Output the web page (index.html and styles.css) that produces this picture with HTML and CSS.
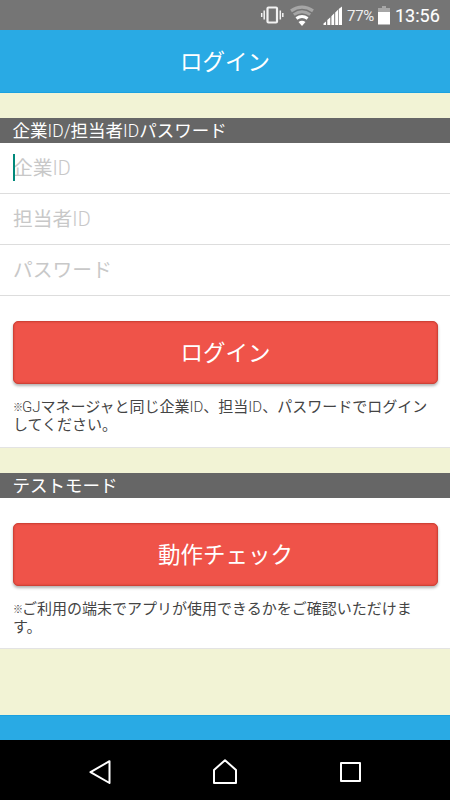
FILE: index.html
```html
<!DOCTYPE html>
<html lang="ja">
<head>
<meta charset="utf-8">
<title>ログイン</title>
<link rel="stylesheet" href="styles.css">
</head>
<body>
<div class="screen">
  <div class="status">
    <svg class="status-icons" width="84" height="30" viewBox="0 0 84 30">
      <g fill="none" stroke="#f2f2f2" stroke-width="1.5">
        <rect x="7.5" y="7.500" width="9.500" height="15" rx="1" stroke-width="2.2"/>
        <path d="M4.200 10.500v9M1.700 13v4M20.300 10.500v9M22.800 13v4"/>
      </g>
      <g fill="none">
        <path d="M31 10.800Q42 3.500 53 10.800" stroke="#a6a6a6" stroke-width="3.200"/>
        <path d="M33.800 14.600Q42 8.800 50.200 14.600" stroke="#a6a6a6" stroke-width="3"/>
        <path d="M36.400 18.500Q42 14.500 47.600 18.500" stroke="#fff" stroke-width="3"/>
      </g>
      <path d="M38.500 22Q42 19.500 45.500 22L42 26Z" fill="#fff"/>
      <path d="M63.500 25v-1.500l2.500-2V25ZM67.300 25v-5l3-2.700V25ZM71.400 25v-8.700l2.800-3V25ZM75.200 25V12.500l2.800-2.800V25ZM78.700 25V9L82 6.500V25Z" fill="#fff"/>
    </svg>
    <span class="percent">77%</span>
    <svg class="battery" width="12" height="19" viewBox="0 0 12 19"><path d="M4 0h4v2h4v4H0V2h4Z" fill="#a6a6a6"/><path d="M0 6h12v12.500H0Z" fill="#fff"/></svg>
    <span class="clock">13:56</span>
  </div>
  <header class="header">ログイン</header>
  <main class="content">
    <h2 class="section-title">企業<span class="latin">ID/</span>担当者<span class="latin">ID</span>パスワード</h2>
    <section class="panel">
      <div class="field focused">企業<span class="latin">ID</span></div>
      <div class="field">担当者<span class="latin">ID</span></div>
      <div class="field">パスワード</div>
      <div class="action first">
        <div class="button">ログイン</div>
        <p class="note"><span class="mark">※</span><span class="latin">GJ</span>マネージャと同じ企業<span class="latin">ID</span>、担当<span class="latin">ID</span>、パスワードでログイン<br>してください。</p>
      </div>
    </section>
    <h2 class="section-title second">テストモード</h2>
    <section class="panel">
      <div class="action">
        <div class="button">動作チェック</div>
        <p class="note"><span class="mark">※</span>ご利用の端末でアプリが使用できるかをご確認いただけま<br>す。</p>
      </div>
    </section>
  </main>
  <footer class="footer"></footer>
  <nav class="nav">
    <svg width="450" height="60" viewBox="0 0 450 60" fill="none" stroke="#fff" stroke-width="2" stroke-linejoin="round">
      <path d="M109.500 21.200L90.500 32.200L109.500 43Z"/>
      <path d="M225 20.200L214 30v13h22V30Z"/>
      <rect x="341" y="23" width="19" height="18"/>
    </svg>
  </nav>
</div>
</body>
</html>
```
FILE: styles.css
```css
* { box-sizing: border-box; margin: 0; padding: 0; }
body {
  font-family: Roboto, "Noto Sans CJK JP", sans-serif;
  background: #f2f3d5;
}
.screen {
  width: 450px;
  height: 800px;
  display: flex;
  flex-direction: column;
  overflow: hidden;
}
.status {
  height: 30px;
  display: flex;
  align-items: center;
  padding-left: 260px;
  background: #757575;
  color: #fff;
  white-space: nowrap;
}
.status-icons { flex: none; }
.percent { width: 31px; margin-left: 3px; font-size: 15px; color: #eee; letter-spacing: -0.3px; padding-top: 1px; }
.battery { flex: none; }
.clock { margin-left: 5px; font-size: 18px; letter-spacing: 0; padding-top: 1px; -webkit-text-stroke: 0.1px #fff; }
.header {
  height: 63px;
  background: #29aae4;
  border-bottom: 1px solid #1ba1e0;
  color: #fff;
  font-size: 22.5px;
  line-height: 64px;
  text-align: center;
}
.content { flex: 1; padding-top: 25px; }
.section-title {
  height: 25px;
  padding-left: 12.5px;
  background: #666;
  color: #fff;
  font-size: 17.5px;
  font-weight: 400;
  line-height: 26px;
}
.latin { font-weight: 300; }
.section-title.second { margin-top: 25px; }
.panel { background: #fff; border-bottom: 1px solid #e3e3e3; }
.field {
  height: 51px;
  padding-left: 13px;
  border-bottom: 1px solid #ddd;
  color: #c8c8c8;
  font-size: 19.8px;
  line-height: 52px;
  position: relative;
}
.focused::before {
  content: "";
  position: absolute;
  left: 12.5px;
  top: 11px;
  width: 2px;
  height: 27px;
  background: #00897b;
}
.action { padding: 25px 12px 12px 13px; }
.action.first { padding-bottom: 13px; }
.button {
  height: 63px;
  border: 1px solid #d04136;
  border-radius: 5px;
  background: #ef5349;
  box-shadow: 0 2px 3px rgba(0, 0, 0, .3), inset 0 0 2px #c83b30;
  color: #fff;
  font-size: 22.5px;
  line-height: 63px;
  text-align: center;
}
.note {
  margin-top: 15px;
  height: 35px;
  color: #444;
  font-size: 15px;
  line-height: 17.5px;
  white-space: nowrap;
}
.mark { display: inline-block; width: 9px; font-size: 10px; line-height: 1; vertical-align: 1px; }
.footer { height: 25px; background: #29aae4; border-top: 1px solid #1ba1e0; }
.nav { height: 60px; background: #000; }
.nav svg { display: block; }
```
